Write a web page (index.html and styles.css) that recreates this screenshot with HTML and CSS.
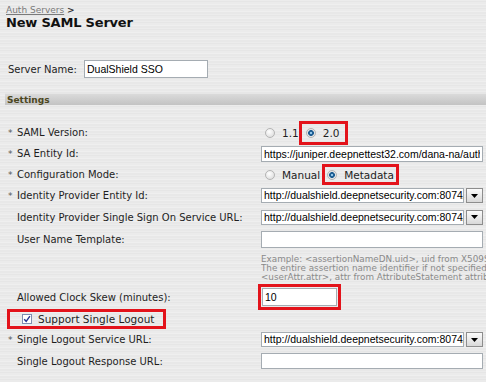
FILE: index.html
```html
<!DOCTYPE html>
<html lang="en">
<head>
  <meta charset="UTF-8" />
  <title>New SAML Server</title>
  <link rel="stylesheet" href="styles.css">
</head>
<body>
  <div class="crumb"><a href="#">Auth Servers</a> <b>&gt;</b></div>
  <h1>New SAML Server</h1>

  <div class="name-row">
    <label class="name-label">Server Name:</label>
    <input class="text name-input" type="text" value="DualShield SSO" />
  </div>

  <div class="section">Settings</div>

  <div class="form">
    <div class="row">
      <div class="label"><span class="req">*</span>SAML Version:</div>
      <div class="control">
        <span class="opt"><span class="radio"></span>1.1</span>
        <span class="mark mark-ver"><span class="radio on"></span>2.0</span>
      </div>
    </div>

    <div class="row">
      <div class="label"><span class="req">*</span>SA Entity Id:</div>
      <div class="control">
        <input class="text wide" type="text" value="https://juniper.deepnettest32.com/dana-na/auth/saml-endpoint.cgi" />
      </div>
    </div>

    <div class="row">
      <div class="label"><span class="req">*</span>Configuration Mode:</div>
      <div class="control">
        <span class="opt"><span class="radio"></span>Manual</span>
        <span class="mark mark-mode"><span class="radio on"></span>Metadata</span>
      </div>
    </div>

    <div class="row">
      <div class="label"><span class="req">*</span>Identity Provider Entity Id:</div>
      <div class="control">
        <div class="select">
          <span class="value">http://dualshield.deepnetsecurity.com:8074/sso/saml</span>
          <span class="btn"><svg width="7" height="4" viewBox="0 0 7 4"><path d="M0 0h7L3.5 4z" fill="#000"/></svg></span>
        </div>
      </div>
    </div>

    <div class="row row-tall">
      <div class="label">Identity Provider Single Sign On Service URL:</div>
      <div class="control">
        <div class="select">
          <span class="value">http://dualshield.deepnetsecurity.com:8074/sso/saml/sso</span>
          <span class="btn"><svg width="7" height="4" viewBox="0 0 7 4"><path d="M0 0h7L3.5 4z" fill="#000"/></svg></span>
        </div>
      </div>
    </div>

    <div class="row row-unt">
      <div class="label">User Name Template:</div>
      <div class="control">
        <input class="text wide tall" type="text" value="" />
      </div>
    </div>

    <div class="example">
      <div class="example-text">
        Example: &lt;assertionNameDN.uid&gt;, uid from X509SubjectName<br />
        The entire assertion name identifier if not specified<br />
        &lt;userAttr.attr&gt;, attr from AttributeStatement attribute
      </div>
    </div>

    <div class="row row-skew">
      <div class="label">Allowed Clock Skew (minutes):</div>
      <div class="control">
        <input class="text skew" type="text" value="10" />
      </div>
    </div>

    <div class="row">
      <div class="label label-plain">
        <span class="mark mark-check">
          <span class="check"><svg width="8" height="8" viewBox="0 0 8 8"><path d="M1.2 4.2L3.2 6.3L6.9 1.2" fill="none" stroke="#26358f" stroke-width="1.4"/></svg></span>
          Support Single Logout
        </span>
      </div>
    </div>

    <div class="row">
      <div class="label"><span class="req">*</span>Single Logout Service URL:</div>
      <div class="control">
        <div class="select">
          <span class="value">http://dualshield.deepnetsecurity.com:8074/sso/saml/slo</span>
          <span class="btn"><svg width="7" height="4" viewBox="0 0 7 4"><path d="M0 0h7L3.5 4z" fill="#000"/></svg></span>
        </div>
      </div>
    </div>

    <div class="row row-tall">
      <div class="label">Single Logout Response URL:</div>
      <div class="control">
        <input class="text wide" type="text" value="" />
      </div>
    </div>
  </div>
</body>
</html>
```

FILE: styles.css
```css
html {
  overflow: hidden;
}
body {
  margin: 0;
  height: 382px;
  overflow: hidden;
  font-family: "DejaVu Sans", Verdana, sans-serif;
  font-size: 10px;
  color: #1e1e1e;
  background-color: #eaeaea;
  background-image: repeating-linear-gradient(180deg, #ececec 0 1px, #e6e6e6 1px 2px, #ebebeb 2px 4px, #efefef 4px 5px, #e8e8e8 5px 7px);
}
.crumb {
  padding: 4px 0 0 6px;
  font-size: 9px;
  line-height: 12px;
  color: #777;
}
.crumb a {
  color: #7a7a7a;
  text-decoration: underline;
}
.crumb b {
  color: #333;
}
h1 {
  margin: 0 0 0 6px;
  font-size: 13px;
  line-height: 14px;
  letter-spacing: -0.2px;
  color: #111;
}
.name-row {
  display: flex;
  align-items: center;
  height: 18px;
  margin-top: 30px;
  padding-left: 8px;
}
.name-label {
  width: 76px;
}
.text {
  box-sizing: border-box;
  margin: 0;
  padding: 0 2px;
  height: 16px;
  font: 10.5px "Liberation Sans", Arial, sans-serif;
  color: #000;
  background: #fff;
  border: 1px solid #a5acb2;
  border-radius: 0;
  outline: none;
}
.name-input {
  width: 124px;
  height: 18px;
}
.section {
  margin: 15px 0 0 5px;
  padding-left: 2px;
  height: 12px;
  line-height: 12px;
  font-size: 9px;
  font-weight: bold;
  color: #4b4620;
  background: linear-gradient(#dadada, #c3c3c3);
  border-top: 1px solid #e6e6e6;
  box-sizing: border-box;
}
.form {
  margin-top: 17px;
  padding-left: 8px;
}
.row {
  display: flex;
  align-items: center;
  height: 21px;
}
.row-tall {
  height: 22px;
}
.row-unt {
  height: 23px;
}
.row-skew {
  height: 22px;
  margin-top: 4px;
}
.label {
  width: 244px;
  padding-left: 9px;
  white-space: nowrap;
}
.label-plain {
  width: 253px;
  padding-left: 0;
}
.req {
  display: inline-block;
  width: 9px;
  margin-left: -9px;
  font-size: 9px;
  color: #555;
}
.control {
  display: flex;
  align-items: center;
  width: 222px;
}
.opt {
  display: flex;
  align-items: center;
  margin-left: 4px;
  font-size: 10.5px;
}
.radio {
  box-sizing: border-box;
  width: 10px;
  height: 10px;
  margin-right: 7px;
  border: 1px solid #b4b4b4;
  border-radius: 50%;
  background: radial-gradient(circle at 40% 35%, #fff, #d6d6d6);
}
.radio.on {
  background: radial-gradient(circle at 50% 50%, #8fc4e8 0 0.8px, #1d5d92 1.6px 2.6px, #e6e6e6 3.2px);
}
.mark {
  display: flex;
  align-items: center;
  outline: 3px solid #e3131b;
  font-size: 10.5px;
}
.mark-ver {
  height: 18px;
  margin-left: 3px;
  padding: 0 6px 0 4px;
}
.mark-mode {
  height: 15px;
  margin-left: 5px;
  padding: 0 2px;
}
.mark-check {
  width: 141px;
  height: 14px;
  margin-left: 2px;
  padding-left: 12px;
}
.check {
  box-sizing: border-box;
  display: flex;
  align-items: center;
  justify-content: center;
  width: 10px;
  height: 10px;
  margin-right: 6px;
  border: 1px solid #7f8db0;
  background: #fff;
}
.wide {
  width: 222px;
}
.tall {
  height: 17px;
}
.skew {
  width: 75px;
  height: 18px;
  margin-left: 1px;
  outline: 3px solid #e3131b;
  outline-offset: 1px;
}
.select {
  display: flex;
  width: 222px;
  height: 15px;
}
.select .value {
  flex: 1;
  overflow: hidden;
  padding: 0 2px;
  white-space: nowrap;
  font: 10.5px/13px "Liberation Sans", Arial, sans-serif;
  color: #000;
  background: #fff;
  border: 1px solid #a5acb2;
}
.select .btn {
  display: flex;
  align-items: center;
  justify-content: center;
  box-sizing: border-box;
  width: 17px;
  margin-left: 2px;
  border: 1px solid #8d8d8d;
  background: linear-gradient(#fbfbfb, #d9d9d9);
}
.example {
  padding: 4px 0 0 253px;
}
.example-text {
  width: 225px;
  overflow: hidden;
  font-size: 8.8px;
  line-height: 9px;
  color: #8a8a8a;
  white-space: nowrap;
}
```
